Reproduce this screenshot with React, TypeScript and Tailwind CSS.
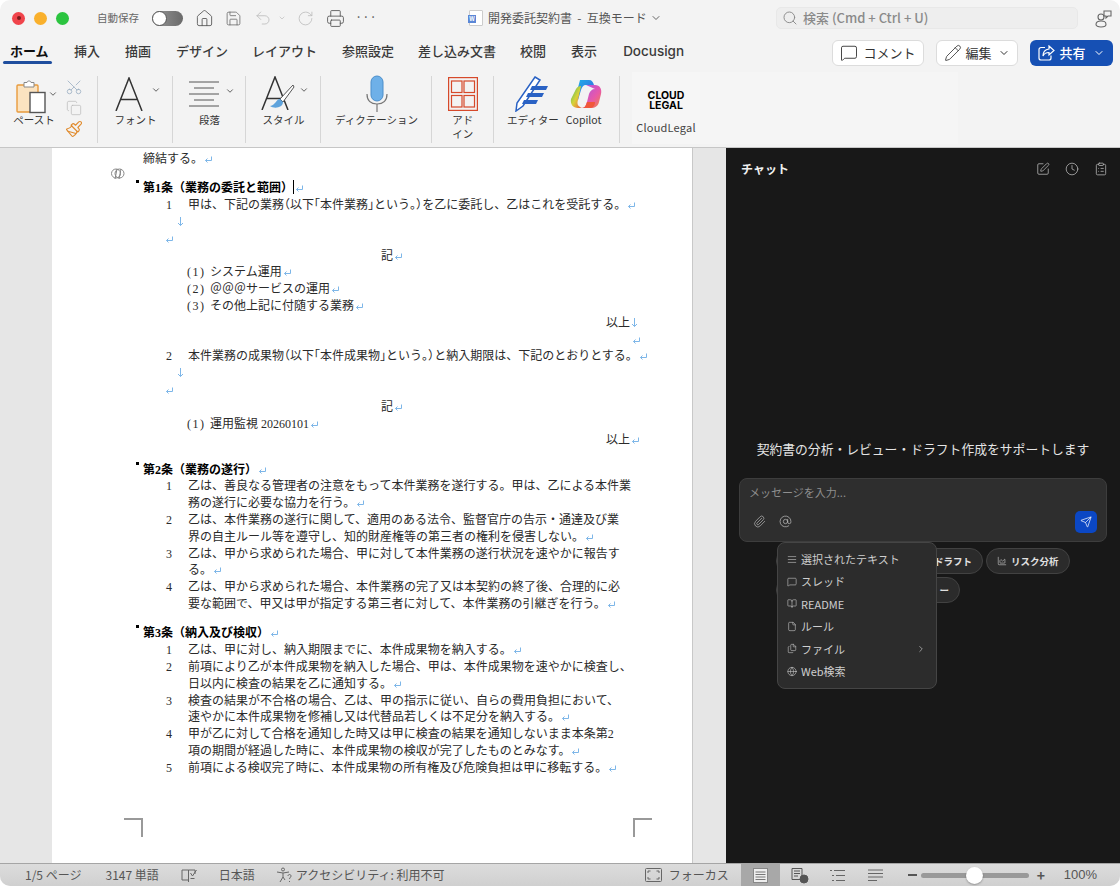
import React from "react";
import { House, Save, Undo2, RotateCw, Printer, ChevronDown, ChevronRight, Search, MessageSquare, Pencil, SquarePen, Clock, ClipboardList, Paperclip, AtSign, Send, AlignJustify, BookOpen, File, Files, Globe, ChartArea, Scissors, Copy, Paintbrush } from "lucide-react";

const Ret = () => (
  <svg width="9" height="9" viewBox="0 0 9 9" className="inline-block ml-[1px] align-[-1px]" fill="none" stroke="#7db6e8" strokeWidth="1">
    <path d="M7.5 1.5V5.5H1.5M3.5 3.5L1.5 5.5L3.5 7.5" />
  </svg>
);
const Down = () => (
  <svg width="9" height="11" viewBox="0 0 9 11" className="inline-block align-[-1px]" fill="none" stroke="#7db6e8" strokeWidth="1">
    <path d="M4.5 1V9.5M2 7L4.5 9.5L7 7" />
  </svg>
);
const H = ({ children }: { children: React.ReactNode }) => <span className="[font-feature-settings:'halt']">{children}</span>;

const Line = ({ children, className = "" }: { children?: React.ReactNode; className?: string }) => (
  <div className={"h-[16.8px] leading-[16.8px] whitespace-nowrap " + className}>{children}</div>
);
const Heading = ({ text, cursor, className = "mt-[12.5px]" }: { text: string; cursor?: boolean; className?: string }) => (
  <div className={"relative h-[16.8px] leading-[16.8px] font-bold text-black whitespace-nowrap " + className}>
    <span className="absolute left-[-7px] top-[0px] w-[3px] h-[3px] bg-black" />
    {text}
    {cursor && <span className="inline-block w-[1px] h-[14px] bg-black align-[-2px]" />}
    <Ret />
  </div>
);
const Num = ({ n, children }: { n?: string; children: React.ReactNode }) => (
  <Line className="flex">
    <span className="w-[23px] shrink-0" />
    <span className="w-[22px] shrink-0">{n}</span>
    <span>{children}</span>
  </Line>
);
const Item = ({ n, children }: { n: string; children: React.ReactNode }) => (
  <Line className="flex pl-[44px]">
    <span className="w-[23px] shrink-0 tracking-[1.5px]">{n}</span>
    <span>{children}</span>
  </Line>
);

const RibbonGroup = ({ w, label, children, sep = true }: { w: string; label: React.ReactNode; children?: React.ReactNode; sep?: boolean }) => (
  <div className={"flex flex-col items-center relative shrink-0 " + w}>
    <div className="h-[36px] flex items-center justify-center">{children}</div>
    <div className="text-[10.5px] leading-[14px] mt-[1px] text-[#333] text-center">{label}</div>
    {sep && <span className="absolute right-0 top-[0px] h-[67px] w-[1px] bg-[#d6d6d6]" />}
  </div>
);

const MenuRow = ({ icon, label, arrow }: { icon: React.ReactNode; label: string; arrow?: boolean }) => (
  <div className="h-[22.4px] flex items-center pl-[9px] pr-[10px] gap-[4px] text-[11px] text-[#cfcfcf]">
    <span className="w-[10px] flex justify-center">{icon}</span>
    <span className="flex-1">{label}</span>
    {arrow && <ChevronRight size={10} color="#aaa" />}
  </div>
);

const Chip = ({ children, className = "" }: { children: React.ReactNode; className?: string }) => (
  <div className={"h-[26px] rounded-full bg-[#2b2b2b] border border-[#424242] flex items-center text-[9.5px] font-bold text-[#e0e0e0] " + className}>{children}</div>
);

const BigA = () => (
  <svg width="28" height="34" viewBox="0 0 28 34" fill="none" stroke="#333" strokeWidth="1.5"><path d="M1 34L14 1L27 34M6 22.5H22" /></svg>
);

export default function App() {
  return (
    <div className="w-[1120px] h-[886px] bg-white overflow-hidden font-['Noto_Sans_CJK_JP','Liberation_Sans',sans-serif]">
      <div className="w-full h-full rounded-[10px] overflow-hidden flex flex-col bg-[#f3f3f3]">
        {/* title bar */}
        <div className="h-[36px] shrink-0 flex items-center relative">
          <div className="flex items-center gap-[9px] ml-[12px]">
            <span className="w-[13px] h-[13px] rounded-full bg-[#f0444b] flex items-center justify-center"><span className="w-[4px] h-[4px] rounded-full bg-[#7a1a1a]" /></span>
            <span className="w-[13px] h-[13px] rounded-full bg-[#f9b02c]" />
            <span className="w-[13px] h-[13px] rounded-full bg-[#2bc43f]" />
          </div>
          <span className="ml-[28px] text-[10.5px] text-[#666] w-[42px] whitespace-nowrap">自動保存</span>
          <span className="ml-[13px] w-[31px] h-[15px] rounded-full bg-gradient-to-r from-[#999] to-[#6a6a6a] relative flex items-center">
            <span className="absolute left-[0px] w-[15px] h-[15px] rounded-full bg-white border border-[#555]" />
          </span>
          <House size={19} strokeWidth={1.1} color="#555" className="ml-[12px]" />
          <Save size={17} strokeWidth={1.1} color="#666" className="ml-[11px]" />
          <Undo2 size={18} strokeWidth={1.1} color="#bbb" className="ml-[12px]" />
          <ChevronDown size={8} color="#bbb" className="ml-[6px]" />
          <RotateCw size={17} strokeWidth={1.1} color="#bbb" className="ml-[11px]" />
          <Printer size={19} strokeWidth={1.1} color="#555" className="ml-[12px]" />
          <span className="ml-[10px] text-[13px] leading-none text-[#555] -mt-[4px]">···</span>
          <div className="ml-[92px] flex items-center">
            <span className="relative w-[14px] h-[16px] bg-white border border-[#ccc] rounded-[1px]">
              <span className="absolute left-[-2px] top-[4px] w-[8px] h-[8px] bg-[#5b87d6] text-white text-[6px] leading-[8px] font-bold text-center">W</span>
            </span>
            <span className="ml-[5px] text-[12px] text-[#555] whitespace-nowrap">開発委託契約書&nbsp;&nbsp;-&nbsp;&nbsp;互換モード</span>
            <ChevronDown size={12} color="#666" className="ml-[3px]" />
          </div>
          <div className="absolute left-[776px] top-[7px] w-[302px] h-[22px] rounded-[5px] bg-[#eeeeee] border border-[#e8e8e8] flex items-center pl-[5px] gap-[5px]">
            <Search size={16} strokeWidth={1.4} color="#888" />
            <span className="text-[13px] text-[#8a8a8a] font-medium">検索 (Cmd + Ctrl + U)</span>
          </div>
          <svg className="absolute left-[1092px] top-[9px]" width="22" height="20" viewBox="0 0 22 20" fill="none" stroke="#666" strokeWidth="1.1">
            <circle cx="9" cy="8" r="3" /><path d="M4 15.5c0-3 2-3.5 5-3.5s5 .5 5 3.5c0 1.5-2 2.5-5 2.5s-5-1-5-2.5z" /><path d="M12 2h7v5h-3l-2 2v-2h-2z" />
          </svg>
        </div>

        {/* tabs */}
        <div className="h-[32px] shrink-0 flex items-start relative text-[13px] text-[#3a3a3a] font-medium">
          <div className="flex items-center h-[29px] pt-[1px] pl-[10px]">
            <span className="relative font-bold text-[#111] w-[38px] whitespace-nowrap">ホーム<span className="absolute left-[-7px] right-[-4px] top-[20px] h-[3px] rounded bg-[#1f4e9e]" /></span>
            <span className="ml-[26px]">挿入</span>
            <span className="ml-[25px]">描画</span>
            <span className="ml-[25px]">デザイン</span>
            <span className="ml-[24px]">レイアウト</span>
            <span className="ml-[25px]">参照設定</span>
            <span className="ml-[24px]">差し込み文書</span>
            <span className="ml-[24px]">校閲</span>
            <span className="ml-[25px]">表示</span>
            <span className="ml-[26px] text-[13.5px] font-['Inter','Liberation_Sans',sans-serif]">Docusign</span>
          </div>
          <div className="absolute left-[832px] top-[4px] flex items-center gap-[12px]">
            <div className="w-[92px] h-[26px] rounded-[6px] bg-white border border-[#dcdcdc] flex items-center justify-center gap-[5px] text-[13px] text-[#333] font-normal">
              <MessageSquare size={18} strokeWidth={1.2} />コメント
            </div>
            <div className="w-[82px] h-[26px] rounded-[6px] bg-white border border-[#dcdcdc] flex items-center justify-center gap-[3px] text-[13px] text-[#333] font-normal">
              <Pencil size={18} strokeWidth={1.1} />編集<ChevronDown size={12} className="ml-[3px]" />
            </div>
            <div className="w-[83px] h-[26px] rounded-[6px] bg-[#1650b4] flex items-center justify-center gap-[4px] text-[13px] text-white">
              <svg width="17" height="16" viewBox="0 0 17 16" fill="none" stroke="#fff" strokeWidth="1.2"><path d="M7 2.5H3a2 2 0 0 0-2 2V13a2 2 0 0 0 2 2h8a2 2 0 0 0 2-2v-2.5" /><path d="M11 1l5 4.5-5 4.5V7.5c-3 0-5 1.2-6 3.5 0-4 2-6.5 6-7z" /></svg>
              共有<ChevronDown size={12} className="ml-[3px]" />
            </div>
          </div>
        </div>

        {/* ribbon */}
        <div className="h-[80px] shrink-0 pt-[8px] flex border-b border-[#c6c6c6] relative">
          <RibbonGroup w="w-[98px]" label={<span className="relative left-[-15px]">ペースト</span>}>
            <div className="relative left-[-12px] top-[3px] flex items-start">
              <div className="relative w-[30px] h-[36px]">
                <svg width="30" height="36" viewBox="0 0 30 36">
                  <rect x="1" y="6" width="21" height="27" rx="1" fill="#fbe3c0" stroke="#e89a3c" strokeWidth="1.4" />
                  <path d="M8 6V3.5h3c0-2 4-2 4 0h3V8H8z" fill="#fff" stroke="#888" strokeWidth="1" />
                  <rect x="14" y="13.5" width="15" height="20" fill="#fff" stroke="#555" strokeWidth="1.4" />
                </svg>
              </div>
              <ChevronDown size={10} strokeWidth={2} color="#444" className="mt-[10px] ml-[2px]" />
            </div>
            <div className="absolute left-[65px] top-[2px] flex flex-col items-center gap-[4px]">
              <Scissors size={18} strokeWidth={1.1} color="#9db0c4" className="rotate-[-90deg]" />
              <Copy size={16} strokeWidth={1} color="#b5b5b5" />
              <Paintbrush size={18} strokeWidth={1.5} color="#e08a2c" />
            </div>
          </RibbonGroup>
          <RibbonGroup w="w-[75px]" label="フォント">
            <div className="relative left-[2px] flex items-center">
              <BigA />
              <ChevronDown size={10} strokeWidth={2} color="#444" className="ml-[8px] mb-[8px]" />
            </div>
          </RibbonGroup>
          <RibbonGroup w="w-[73px]" label="段落">
            <div className="relative left-[2px] flex items-center">
              <svg width="30" height="26" viewBox="0 0 30 26" stroke="#555" strokeWidth="1"><path d="M0 1h30M5 7h20M0 13h30M5 19h20M0 25h30" /></svg>
              <ChevronDown size={10} strokeWidth={2} color="#444" className="ml-[6px] mb-[6px]" />
            </div>
          </RibbonGroup>
          <RibbonGroup w="w-[75px]" label="スタイル">
            <div className="relative left-[1px] flex items-center">
              <div className="relative w-[34px] h-[36px]">
                <div className="absolute left-0 top-[0px]"><BigA /></div>
                <svg className="absolute left-[6px] top-[6px]" width="28" height="30" viewBox="0 0 28 30">
                  <path d="M26 3L13 17l3 3L27 5z" fill="#fff" stroke="#555" />
                  <path d="M13 17c-4 0-4 6-10 7 4 3 13 2 13-4z" fill="#5ea3dc" />
                </svg>
              </div>
              <ChevronDown size={10} strokeWidth={2} color="#444" className="ml-[4px] mb-[8px]" />
            </div>
          </RibbonGroup>
          <RibbonGroup w="w-[111px]" label="ディクテーション">
            <svg width="24" height="38" viewBox="0 0 24 38">
              <rect x="6" y="1" width="12" height="25" rx="6" fill="#6eb0e8" stroke="#4a8ecb" />
              <path d="M2 19c0 7 4 10 10 10s10-3 10-10" fill="none" stroke="#777" strokeWidth="1.2" />
              <path d="M12 29v8" stroke="#777" strokeWidth="1.2" />
            </svg>
          </RibbonGroup>
          <RibbonGroup w="w-[61.5px]" label={<span className="block leading-[14px]">アド<br />イン</span>}>
            <svg width="30" height="34" viewBox="0 0 30 34" fill="none" stroke="#d6492a" strokeWidth="1.2">
              <rect x="0.6" y="0.6" width="28.8" height="32.8" /><rect x="3.5" y="4" width="10.5" height="11.5" /><rect x="16" y="4" width="10.5" height="11.5" /><rect x="3.5" y="18.5" width="10.5" height="11.5" /><rect x="16" y="18.5" width="10.5" height="11.5" />
            </svg>
          </RibbonGroup>
          <RibbonGroup w="w-[126.5px]" label={<span className="flex gap-[7px] whitespace-nowrap pr-[5px]"><span>エディター</span><span>Copilot</span></span>}>
            <div className="flex items-center gap-[20px] ml-[2px]">
              <svg width="36" height="36" viewBox="0 0 36 36">
                <path d="M21 1L26 4L9 30L2 35L3 27z" fill="#fff" stroke="#2a62c4" strokeWidth="1.5" />
                <path d="M18 10h16l-2 4H16zM14 17h16l-2 4H12zM10 24h14l-2 4H8z" fill="#2a62c4" />
              </svg>
              <svg width="32" height="32" viewBox="0 0 32 32">
                <defs>
                  <linearGradient id="cpa" x1="0" y1="0" x2="1" y2="1"><stop offset="0" stopColor="#1fb3e8" /><stop offset="1" stopColor="#3a5ee0" /></linearGradient>
                  <linearGradient id="cpb" x1="0" y1="0" x2="1" y2="1"><stop offset="0" stopColor="#a855e8" /><stop offset="0.6" stopColor="#e858a8" /><stop offset="1" stopColor="#f0883a" /></linearGradient>
                  <linearGradient id="cpc" x1="0" y1="0" x2="1" y2="1"><stop offset="0" stopColor="#3dba6a" /><stop offset="0.5" stopColor="#d8d238" /><stop offset="1" stopColor="#f0583a" /></linearGradient>
                </defs>
                <path d="M10 2h9c3 0 4 2 5 5h-8c-3 0-4 2-5 5L8 22c-1 0-2 0-3-1z" fill="url(#cpa)" />
                <path d="M6 11c1-2 3-3 5-3l-3 14c-1 3-1 6 4 8H8c-5 0-8-4-7-9z" fill="url(#cpc)" />
                <path d="M16 7h9c5 0 7 4 6 9l-2 8c-1 4-4 6-8 6h-9c3 0 4-3 5-6l2-8c1-3 3-5 6-5z" fill="url(#cpb)" />
                <path d="M12 30h9c3-1 4-3 4-6h-8c-1 3-2 6-5 6z" fill="#f0583a" />
              </svg>
            </div>
          </RibbonGroup>
          <div className="w-[68px] shrink-0 ml-[12px] h-[72px] bg-[#f6f6f6] -mt-[4px] flex flex-col items-center pt-[19px]">
            <div className="text-[10.5px] leading-[10px] font-bold text-black text-center font-['Inter','Liberation_Sans',sans-serif] w-[68px]">CLOUD<br />LEGAL</div>
            <div className="text-[11px] leading-[16px] text-[#444] mt-[8px] w-[68px] text-center tracking-[0.2px] whitespace-nowrap">CloudLegal</div>
          </div>
          <div className="w-[258px] shrink-0 h-[72px] bg-[#f5f5f5] -mt-[4px]" />
        </div>

        {/* main */}
        <div className="h-[715px] shrink-0 flex overflow-hidden">
          <div className="w-[726px] shrink-0 bg-[#e6e6e6] pl-[52px] relative">
            <svg className="absolute left-[110px] top-[18px]" width="16" height="15" viewBox="0 0 16 15" fill="none" stroke="#888" strokeWidth="1"><circle cx="6" cy="7.5" r="4.5" /><circle cx="9.5" cy="7.5" r="4.5" /><path d="M7 3l-2 10M11 3l-2 10" /></svg>
            <div className="w-[641px] h-full bg-white border-r border-[#c8c8c8] pl-[91px] pt-[2.6px] text-[12px] text-[#2a2a2a] font-['Liberation_Serif','Noto_Sans_CJK_JP',serif]">
              <Line>締結する。<Ret /></Line>
              <Heading text="第1条（業務の委託と範囲）" cursor className="mt-[13px]" />
              <Num n="1">甲は、下記の業務<H>（</H>以下<H>「</H>本件業務<H>」</H>という<H>。）</H>を乙に委託し、乙はこれを受託する。<Ret /></Num>
              <Line className="pl-[33px]"><Down /></Line>
              <Line className="pl-[21px]"><Ret /></Line>
              <Line className="pl-[238px]">記<Ret /></Line>
              <Item n="(1)">システム運用<Ret /></Item>
              <Item n="(2)">＠＠＠サービスの運用<Ret /></Item>
              <Item n="(3)">その他上記に付随する業務<Ret /></Item>
              <Line className="pl-[463px]">以上<Down /></Line>
              <Line className="pl-[488px]"><Ret /></Line>
              <Num n="2">本件業務の成果物<H>（</H>以下<H>「</H>本件成果物<H>」</H>という<H>。）</H>と納入期限は、下記のとおりとする。<Ret /></Num>
              <Line className="pl-[33px]"><Down /></Line>
              <Line className="pl-[21px]"><Ret /></Line>
              <Line className="pl-[238px]">記<Ret /></Line>
              <Item n="(1)">運用監視 20260101<Ret /></Item>
              <Line className="pl-[463px]">以上<Ret /></Line>
              <Heading text="第2条（業務の遂行）" />
              <Num n="1">乙は、善良なる管理者の注意をもって本件業務を遂行する。甲は、乙による本件業</Num>
              <Num>務の遂行に必要な協力を行う。<Ret /></Num>
              <Num n="2">乙は、本件業務の遂行に関して、適用のある法令、監督官庁の告示・通達及び業</Num>
              <Num>界の自主ルール等を遵守し、知的財産権等の第三者の権利を侵害しない。<Ret /></Num>
              <Num n="3">乙は、甲から求められた場合、甲に対して本件業務の遂行状況を速やかに報告す</Num>
              <Num>る。<Ret /></Num>
              <Num n="4">乙は、甲から求められた場合、本件業務の完了又は本契約の終了後、合理的に必</Num>
              <Num>要な範囲で、甲又は甲が指定する第三者に対して、本件業務の引継ぎを行う。<Ret /></Num>
              <Heading text="第3条（納入及び検収）" />
              <Num n="1">乙は、甲に対し、納入期限までに、本件成果物を納入する。<Ret /></Num>
              <Num n="2">前項により乙が本件成果物を納入した場合、甲は、本件成果物を速やかに検査し、</Num>
              <Num>日以内に検査の結果を乙に通知する。<Ret /></Num>
              <Num n="3">検査の結果が不合格の場合、乙は、甲の指示に従い、自らの費用負担において、</Num>
              <Num>速やかに本件成果物を修補し又は代替品若しくは不足分を納入する。<Ret /></Num>
              <Num n="4">甲が乙に対して合格を通知した時又は甲に検査の結果を通知しないまま本条第2</Num>
              <Num>項の期間が経過した時に、本件成果物の検収が完了したものとみなす。<Ret /></Num>
              <Num n="5">前項による検収完了時に、本件成果物の所有権及び危険負担は甲に移転する。<Ret /></Num>
              <div className="mt-[42px] flex justify-between w-[528px] -ml-[19px]">
                <span className="w-[19px] h-[19px] border-t-[2px] border-r-[2px] border-[#999]" />
                <span className="w-[19px] h-[19px] border-t-[2px] border-l-[2px] border-[#999]" />
              </div>
            </div>
          </div>

          {/* chat */}
          <div className="flex-1 bg-[#181818] flex flex-col text-white relative">
            <div className="h-[42px] flex items-center pl-[15px] pr-[12px]">
              <span className="text-[12px] font-bold flex-1 text-[#f0f0f0]">チャット</span>
              <div className="flex items-center gap-[15px]">
                <SquarePen size={14} strokeWidth={1.3} color="#bbb" />
                <Clock size={14} strokeWidth={1.3} color="#bbb" />
                <ClipboardList size={14} strokeWidth={1.3} color="#bbb" />
              </div>
            </div>
            <div className="mt-[249px] text-center text-[12.8px] leading-[20px] text-[#e4e4e4]">契約書の分析・レビュー・ドラフト作成をサポートします</div>
            <div className="mt-[19px] mx-[13px] h-[64px] rounded-[8px] bg-[#2e2e2e] border border-[#3d3d3d] pl-[9px] pr-[9px] pt-[4px] relative">
              <div className="text-[11px] leading-[18px] text-[#8f8f8f]">メッセージを入力...</div>
              <div className="flex items-center mt-[9px] pl-[4px]">
                <Paperclip size={13} strokeWidth={1.3} color="#b5b5b5" />
                <AtSign size={13} strokeWidth={1.4} color="#b5b5b5" className="ml-[13px]" />
                <span className="ml-auto w-[22px] h-[22px] mt-[1px] rounded-[5px] bg-[#0b47c4] flex items-center justify-center"><Send size={12} strokeWidth={1.4} color="#fff" /></span>
              </div>
            </div>
            <div className="mt-[6px] ml-[50px] flex flex-wrap gap-x-[3px] gap-y-[3px] w-[300px] relative">
              <Chip className="w-[207px] justify-end pr-[10px]">ドラフト</Chip>
              <Chip className="w-[84px] pl-[10px] gap-[4px]"><ChartArea size={10} strokeWidth={1.3} color="#ddd" />リスク分析</Chip>
              <Chip className="w-[184px] justify-end pr-[10px]">ー</Chip>
            </div>
            <div className="absolute left-[51px] top-[394px] w-[160px] h-[147px] rounded-[8px] bg-[#2c2c2c] border border-[#454545] pt-[5px]">
              <MenuRow icon={<AlignJustify size={11} strokeWidth={1.4} color="#ccc" />} label="選択されたテキスト" />
              <MenuRow icon={<MessageSquare size={10} strokeWidth={1.4} color="#ccc" />} label="スレッド" />
              <MenuRow icon={<BookOpen size={11} strokeWidth={1.4} color="#ccc" />} label="README" />
              <MenuRow icon={<File size={11} strokeWidth={1.4} color="#ccc" />} label="ルール" />
              <MenuRow icon={<Files size={11} strokeWidth={1.4} color="#ccc" />} label="ファイル" arrow />
              <MenuRow icon={<Globe size={11} strokeWidth={1.4} color="#ccc" />} label="Web検索" />
            </div>
          </div>
        </div>

        {/* status bar */}
        <div className="flex-1 bg-gradient-to-b from-[#dcdcdc] to-[#d0d0d0] border-t border-[#a5a5a5] flex items-center text-[12px] text-[#555] relative">
          <span className="ml-[25px] whitespace-nowrap">1/5 ページ</span>
          <span className="ml-[24px] whitespace-nowrap">3147 単語</span>
          <svg className="ml-[22px]" width="16" height="15" viewBox="0 0 16 15" fill="none" stroke="#666"><path d="M7.5 2H1v10h6.5zM7.5 14V2M7.5 2H14v4M9.5 10.5h4M9.5 5l2 3 4-6" /></svg>
          <span className="ml-[22px] whitespace-nowrap">日本語</span>
          <svg className="ml-[21px]" width="17" height="17" viewBox="0 0 17 17" fill="none" stroke="#666"><circle cx="7" cy="2.5" r="1.5" /><path d="M1 5l6 1 6-1M7 6v4M7 10l-3 5M7 10l2 3" /><path d="M12 9c0-2 3-2 3 0 0 1.5-1.5 1.5-1.5 3M13.5 14v1" /></svg>
          <span className="ml-[3px] whitespace-nowrap">アクセシビリティ: 利用不可</span>
          <div className="ml-auto flex items-center h-full">
            <svg width="17" height="14" viewBox="0 0 17 14" fill="none" stroke="#666"><rect x="0.5" y="0.5" width="16" height="13" rx="1" /><path d="M3 5V3h2.5M11.5 3H14v2M14 9v2h-2.5M5.5 11H3V9" /></svg>
            <span className="ml-[7px] whitespace-nowrap">フォーカス</span>
            <div className="ml-[12px] w-[39px] h-full bg-[#a8a8a8] flex items-center justify-center">
              <svg width="15" height="15" viewBox="0 0 15 15"><rect x="0.5" y="0.5" width="14" height="14" fill="#eee" stroke="#888" /><path d="M2.5 4h10M2.5 6.5h10M2.5 9h10M2.5 11.5h10" stroke="#777" /></svg>
            </div>
            <svg className="ml-[11px]" width="18" height="17" viewBox="0 0 18 17" fill="none" stroke="#555"><path d="M1 1.5h10v11H1zM3 4h6M3 6.5h6M3 9h4" /><circle cx="13" cy="12" r="4" fill="#555" /></svg>
            <svg className="ml-[21px]" width="15" height="13" viewBox="0 0 15 13" fill="none" stroke="#666"><path d="M0 1.5h2M4 1.5h11M2 6.5h2M6 6.5h9M2 11.5h2M6 11.5h9" /></svg>
            <svg className="ml-[23px]" width="15" height="13" viewBox="0 0 15 13" fill="none" stroke="#666"><path d="M0 1h15M0 4.5h15M0 8h15M0 11.5h9" /></svg>
            <span className="ml-[25px] w-[9px] h-[2px] bg-[#555]" />
            <div className="ml-[4px] w-[108px] h-[5px] rounded-full bg-[#999] relative">
              <span className="absolute left-[45.5px] top-[-6px] w-[17px] h-[17px] rounded-full bg-white shadow-[0_1px_2px_rgba(0,0,0,0.3)]" />
            </div>
            <span className="ml-[8px] text-[14px] leading-none text-[#555] font-bold w-[9px]">+</span>
            <span className="ml-[18px] mr-[23px] text-[13px] whitespace-nowrap font-['Liberation_Sans',sans-serif]">100%</span>
          </div>
        </div>
      </div>
    </div>
  );
}
